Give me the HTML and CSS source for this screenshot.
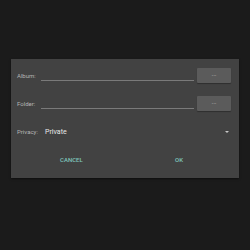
FILE: index.html
```html
<!DOCTYPE html>
<html lang="en">
<head>
    <meta charset="UTF-8">
    <meta name="viewport" content="width=device-width, initial-scale=1.0">
    <title>Album</title>
    <link rel="stylesheet" href="styles.css">
</head>
<body>
    <div class="dialog">
        <div class="row">
            <span class="label">Album:</span>
            <div class="field"></div>
            <button class="browse">...</button>
        </div>
        <div class="row">
            <span class="label">Folder:</span>
            <div class="field"></div>
            <button class="browse">...</button>
        </div>
        <div class="row privacy">
            <span class="label">Privacy:</span>
            <span class="value">Private</span>
            <span class="arrow"></span>
        </div>
        <div class="actions">
            <span class="action">CANCEL</span>
            <span class="action">OK</span>
        </div>
    </div>
</body>
</html>
```

FILE: styles.css
```css
body {
    margin: 0;
    padding: 0;
    background-color: #1b1b1b;
    font-family: Roboto, "Liberation Sans", sans-serif;
    width: 250px;
    height: 250px;
    overflow: hidden;
}

.dialog {
    margin: 59px 0 0 11px;
    width: 228px;
    height: 119px;
    background-color: #424242;
    box-sizing: border-box;
    padding: 9px 8px 0 6px;
    box-shadow: 0 1px 2px rgba(0, 0, 0, 0.5);
}

.row {
    display: flex;
    align-items: center;
    height: 15px;
    margin-bottom: 13px;
}

.label {
    color: #b4b4b4;
    font-size: 6px;
    width: 24px;
}

.field {
    flex: 1;
    align-self: flex-end;
    height: 1px;
    margin: 0 3px 2px 0;
    background-color: #7a7a7a;
}

.browse {
    width: 34px;
    height: 15px;
    border: none;
    border-radius: 1px;
    background-color: #5b5b5b;
    color: #d0d0d0;
    font-size: 6px;
    padding: 0 0 3px;
    line-height: 1;
    box-shadow: 0 1px 1px rgba(0, 0, 0, 0.3);
}

.privacy {
    margin-bottom: 17px;
}

.privacy .label {
    width: 28px;
}

.value {
    flex: 1;
    color: #e8e8e8;
    font-size: 7px;
}

.arrow {
    width: 0;
    height: 0;
    margin-right: 2px;
    border-left: 2px solid transparent;
    border-right: 2px solid transparent;
    border-top: 2px solid #c8c8c8;
}

.actions {
    display: flex;
    justify-content: space-between;
    padding: 0 48px 0 43px;
}

.action {
    color: #7fc6bd;
    font-size: 6px;
    font-weight: 500;
}
```
